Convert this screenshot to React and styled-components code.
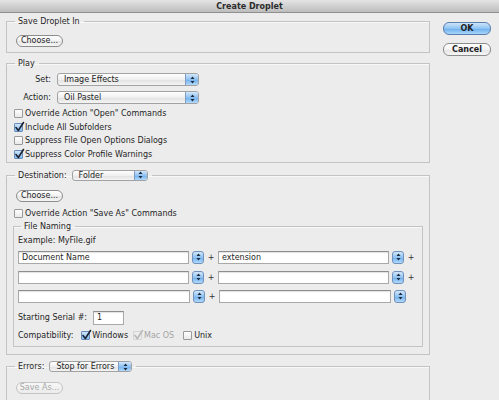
import React from "react";
import styled, { createGlobalStyle } from "styled-components";

const GlobalStyle = createGlobalStyle`
  html, body {
    margin: 0;
    padding: 0;
    background: #ececec;
  }
  body {
    font-family: "DejaVu Sans", "Liberation Sans", sans-serif;
    font-size: 8px;
    color: #1f1f1f;
  }
`;

const Window = styled.div`
  width: 499px;
  height: 400px;
  overflow: hidden;
  background: #ececec;
  display: flex;
  flex-direction: column;
`;

const TitleBar = styled.div`
  flex: none;
  height: 12px;
  border-bottom: 1px solid #8f8f8f;
  background: linear-gradient(#e4e4e4, #bdbdbd);
  display: flex;
  align-items: center;
  justify-content: center;
  font-weight: bold;
  color: #2b2b2b;
`;

const Body = styled.div`
  display: flex;
  align-items: flex-start;
  padding: 3px 0 0 6px;
`;

const Main = styled.div`
  width: 424px;
  display: flex;
  flex-direction: column;
`;

const Side = styled.div`
  margin-left: 13px;
  padding-top: 6px;
  display: flex;
  flex-direction: column;
  gap: 8px;
`;

const Group = styled.fieldset`
  margin: ${(p) => p.$mt || 0}px 0 0 0;
  padding: ${(p) => p.$pt || 0}px 6px ${(p) => p.$pb || 0}px 7px;
  border: 1px solid #c3c3c3;
  box-shadow: inset 0 1px 0 #f8f8f8;
  min-width: 0;
  display: flex;
  flex-direction: column;
`;

const InnerGroup = styled(Group)`
  margin-left: -1px;
  padding-left: 4px;
  padding-right: 4px;
`;

const Legend = styled.legend`
  padding: 0 4px 0 3px;
  margin-left: ${(p) => p.$ml || 1}px;
  line-height: 11px;
  height: ${(p) => p.$h || 11}px;
  display: flex;
  align-items: center;
  gap: 5px;
`;

const PushButton = styled.button`
  box-sizing: border-box;
  width: ${(p) => p.$w || 47}px;
  height: 12px;
  margin-left: ${(p) => p.$ml || 0}px;
  padding: 0;
  font: inherit;
  font-size: 8px;
  line-height: 10px;
  color: ${(p) => (p.disabled ? "#a8a8a8" : "#1f1f1f")};
  border: 1px solid ${(p) => (p.disabled ? "#c4c4c4" : p.$primary ? "#5a7fad" : "#8c8c8c")};
  border-radius: 6px;
  background: ${(p) =>
    p.$primary
      ? "linear-gradient(#cfe5fb 0%, #8fc3f3 50%, #6aaeec 51%, #a9d6fb 100%)"
      : p.disabled
      ? "linear-gradient(#f7f7f7, #ececec)"
      : "linear-gradient(#ffffff 0%, #f2f2f2 50%, #e4e4e4 51%, #f6f6f6 100%)"};
  font-weight: ${(p) => (p.$primary ? "bold" : "normal")};
  text-align: center;
`;

const SideButton = styled(PushButton)`
  height: 13px;
  width: 48px;
  font-weight: bold;
`;

const Row = styled.div`
  display: flex;
  align-items: center;
  height: ${(p) => p.$h || 13}px;
  margin-top: ${(p) => p.$mt || 0}px;
`;

const FieldLabel = styled.span`
  min-width: ${(p) => p.$w || 0}px;
  text-align: right;
  margin-right: ${(p) => p.$gap || 6}px;
  white-space: nowrap;
`;

const SelectBox = styled.div`
  box-sizing: border-box;
  width: ${(p) => p.$w}px;
  height: ${(p) => p.$h || 13}px;
  display: flex;
  align-items: stretch;
  border: 1px solid #a2a2a2;
  border-radius: 3px;
  background: linear-gradient(#ffffff, #eeeeee 55%, #e3e3e3 56%, #f4f4f4);
  overflow: hidden;
`;

const SelectValue = styled.span`
  flex: 1;
  padding-left: 6px;
  display: flex;
  align-items: center;
  white-space: nowrap;
`;

const SelectArrows = styled.span`
  width: 12px;
  display: flex;
  align-items: center;
  justify-content: center;
  border-left: 1px solid #7d9cc3;
  background: linear-gradient(#d3e8fc, #8fc1f1 50%, #70afeb 51%, #b2dafc);
`;

const StepperBox = styled.span`
  box-sizing: border-box;
  width: 12px;
  height: 13px;
  margin-left: 3px;
  display: flex;
  align-items: center;
  justify-content: center;
  border: 1px solid #6f91bb;
  border-radius: 3px;
  background: linear-gradient(#d3e8fc, #8fc1f1 50%, #70afeb 51%, #b2dafc);
`;

const TextField = styled.span`
  box-sizing: border-box;
  width: ${(p) => p.$w}px;
  height: ${(p) => p.$h || 13}px;
  display: flex;
  align-items: center;
  padding-left: 3px;
  background: #fff;
  border: 1px solid #a9a9a9;
  border-top-color: #8e8e8e;
  box-shadow: inset 0 1px 1px rgba(0, 0, 0, 0.12);
  white-space: nowrap;
`;

const Plus = styled.span`
  width: 14px;
  text-align: center;
  color: #333;
`;

const CheckRow = styled.label`
  display: flex;
  align-items: center;
  height: 13.5px;
  margin-left: ${(p) => p.$ml || 0}px;
  margin-top: ${(p) => p.$mt || 0}px;
  color: ${(p) => (p.$disabled ? "#a5a5a5" : "inherit")};
  white-space: nowrap;
`;

const Box = styled.span`
  position: relative;
  box-sizing: border-box;
  flex: none;
  width: 9px;
  height: 9px;
  margin-right: 2px;
  border: 1px solid ${(p) => (p.$disabled ? "#d4d4d4" : p.$on ? "#6a8db8" : "#9a9a9a")};
  border-radius: 1px;
  background: ${(p) =>
    p.$disabled
      ? "transparent"
      : p.$on
      ? "linear-gradient(#d0e6fb, #86bdf1)"
      : "linear-gradient(#ffffff, #e9e9e9)"};

  svg {
    position: absolute;
    left: -1px;
    top: -3px;
  }
`;

const Inline = styled.div`
  display: flex;
  align-items: center;
  gap: ${(p) => p.$gap || 0}px;
`;

const Arrows = () => (
  <svg width="5" height="8" viewBox="0 0 5 8">
    <path d="M2.5 0.5 L4.5 3 L0.5 3 Z" fill="#1b2a3d" />
    <path d="M2.5 7.5 L4.5 5 L0.5 5 Z" fill="#1b2a3d" />
  </svg>
);

const Select = ({ w, h, value }) => (
  <SelectBox $w={w} $h={h}>
    <SelectValue>{value}</SelectValue>
    <SelectArrows>
      <Arrows />
    </SelectArrows>
  </SelectBox>
);

const Check = ({ on, disabled, children, ml, mt }) => (
  <CheckRow $ml={ml} $mt={mt} $disabled={disabled}>
    <Box $on={on} $disabled={disabled}>
      {on && (
        <svg width="11" height="12" viewBox="0 0 11 12">
          <path
            d="M2 6.5 L4.3 9.5 L9.5 1.5"
            fill="none"
            stroke={disabled ? "#b8b8b8" : "#1b2433"}
            strokeWidth="1.6"
            strokeLinecap="round"
            strokeLinejoin="round"
          />
        </svg>
      )}
    </Box>
    {children}
  </CheckRow>
);

const NameRow = ({ first, second, plusEnd, mt }) => (
  <Row $mt={mt}>
    <TextField $w={172}>{first}</TextField>
    <StepperBox>
      <Arrows />
    </StepperBox>
    <Plus>+</Plus>
    <TextField $w={172}>{second}</TextField>
    <StepperBox>
      <Arrows />
    </StepperBox>
    {plusEnd && <Plus>+</Plus>}
  </Row>
);

export default function App() {
  return (
    <>
      <GlobalStyle />
      <Window>
        <TitleBar>Create Droplet</TitleBar>
        <Body>
          <Main>
            <Group $pt={8} $pb={5}>
              <Legend>Save Droplet In</Legend>
              <PushButton $ml={2}>Choose...</PushButton>
            </Group>

            <Group $mt={5} $pt={4} $pb={1}>
              <Legend>Play</Legend>
              <Row>
                <FieldLabel $w={37}>Set:</FieldLabel>
                <Select w={142} value="Image Effects" />
              </Row>
              <Row $mt={5}>
                <FieldLabel $w={37}>Action:</FieldLabel>
                <Select w={142} value="Oil Pastel" />
              </Row>
              <Check mt={3}>Override Action "Open" Commands</Check>
              <Check on>Include All Subfolders</Check>
              <Check>Suppress File Open Options Dialogs</Check>
              <Check on>Suppress Color Profile Warnings</Check>
            </Group>

            <Group $mt={6} $pt={9} $pb={7}>
              <Legend $h={12}>
                Destination:
                <Select w={76} h={11} value="Folder" />
              </Legend>
              <PushButton $ml={2}>Choose...</PushButton>
              <Check mt={5}>Override Action "Save As" Commands</Check>
              <InnerGroup $pt={3} $pb={4}>
                <Legend $ml={3}>File Naming</Legend>
                <Row $h={11}>Example: MyFile.gif</Row>
                <NameRow mt={5} first="Document Name" second="extension" plusEnd />
                <NameRow mt={7} plusEnd />
                <NameRow mt={6} />
                <Row $h={14} $mt={8}>
                  <FieldLabel $gap={6}>Starting Serial #:</FieldLabel>
                  <TextField $w={31} $h={14}>
                    1
                  </TextField>
                </Row>
                <Row $h={12} $mt={5}>
                  <FieldLabel $w={51} $gap={8}>
                    Compatibility:
                  </FieldLabel>
                  <Inline $gap={5}>
                    <Check on>Windows</Check>
                    <Check on disabled>
                      Mac OS
                    </Check>
                    <Check ml={4}>Unix</Check>
                  </Inline>
                </Row>
              </InnerGroup>
            </Group>

            <Group $mt={6} $pt={9} $pb={6}>
              <Legend $h={12}>
                Errors:
                <Select w={83} h={11} value="Stop for Errors" />
              </Legend>
              <PushButton $ml={2} disabled>
                Save As...
              </PushButton>
            </Group>
          </Main>
          <Side>
            <SideButton $primary>OK</SideButton>
            <SideButton>Cancel</SideButton>
          </Side>
        </Body>
      </Window>
    </>
  );
}
